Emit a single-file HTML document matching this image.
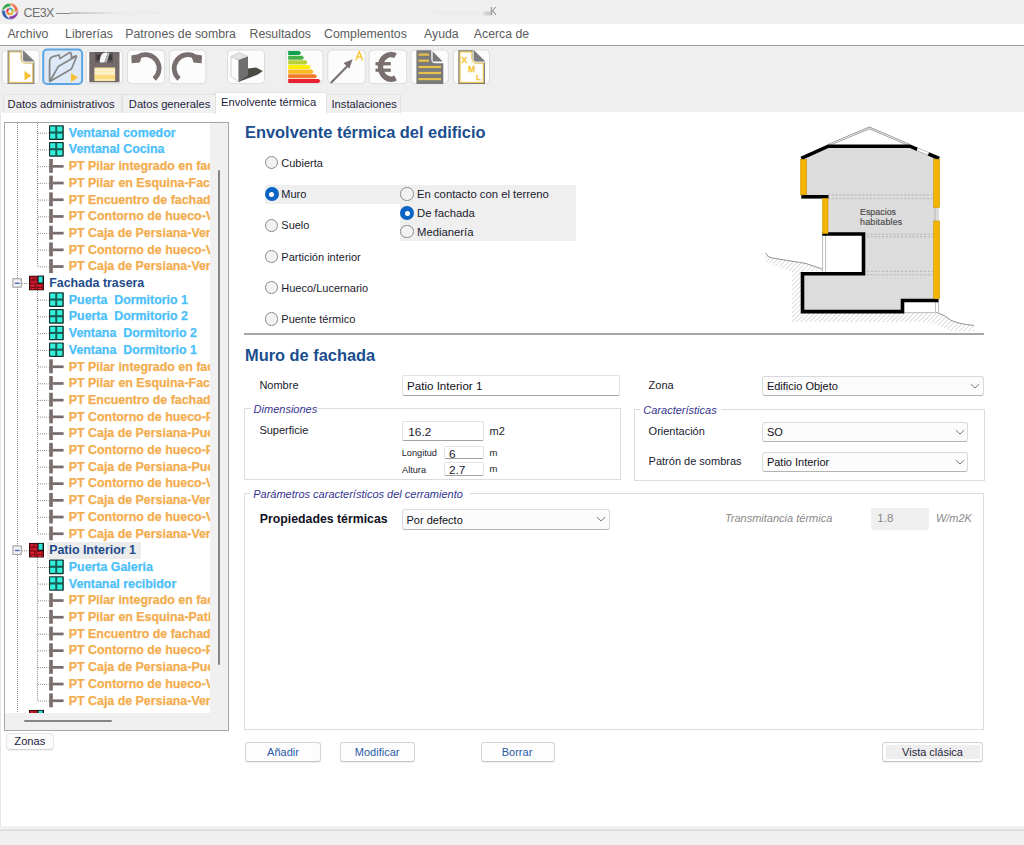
<!DOCTYPE html><html><head><meta charset="utf-8"><style>
html,body{margin:0;padding:0;width:1024px;height:845px;overflow:hidden;background:#fff;position:relative;font-family:"Liberation Sans", sans-serif}
.t{position:absolute;white-space:nowrap;line-height:0;}
</style></head><body>
<div style="position:absolute;left:0px;top:0px;width:1024px;height:24px;background:#f0f0f0"></div>
<svg style="position:absolute;left:0;top:0" width="24" height="24" viewBox="0 0 24 24">
<g transform="translate(10,11.4)">
<path id="pt" d="M-8.2,1.2 A8.3,8.3 0 0 1 1.3,-8.2 L0.8,-4.9 Q-5.2,-4.6 -8.2,1.2 Z" fill="#3ea84c" stroke="#f4f4f4" stroke-width="0.5"/>
<path d="M-8.2,1.2 A8.3,8.3 0 0 1 1.3,-8.2 L0.8,-4.9 Q-5.2,-4.6 -8.2,1.2 Z" fill="#ee7654" stroke="#f4f4f4" stroke-width="0.5" transform="rotate(90)"/>
<path d="M-8.2,1.2 A8.3,8.3 0 0 1 1.3,-8.2 L0.8,-4.9 Q-5.2,-4.6 -8.2,1.2 Z" fill="#8c44a4" stroke="#f4f4f4" stroke-width="0.5" transform="rotate(180)"/>
<path d="M-8.2,1.2 A8.3,8.3 0 0 1 1.3,-8.2 L0.8,-4.9 Q-5.2,-4.6 -8.2,1.2 Z" fill="#3c62b4" stroke="#f4f4f4" stroke-width="0.5" transform="rotate(270)"/>
<path d="M-2.7,0.6 A2.75,2.75 0 0 1 -1.2,-2.5" fill="none" stroke="#e03c60" stroke-width="2.1"/>
<path d="M-1.2,-2.5 A2.75,2.75 0 0 1 1.9,-2" fill="none" stroke="#50a8d0" stroke-width="2.1"/>
<path d="M1.9,-2 A2.75,2.75 0 0 1 2.6,1" fill="none" stroke="#98c040" stroke-width="2.1"/>
<path d="M2.6,1 A2.75,2.75 0 0 1 0.2,2.75" fill="none" stroke="#f0b828" stroke-width="2.1"/>
<path d="M0.2,2.75 A2.75,2.75 0 0 1 -2.7,0.6" fill="none" stroke="#f08838" stroke-width="2.1"/>
</g></svg>
<div class="t" style="left:23.50px;top:12.67px;font-size:12.5px;color:#707070;font-weight:normal;font-style:normal;letter-spacing:-0.6px">CE3X</div>
<div style="position:absolute;left:56px;top:12.6px;width:16px;height:1.2px;background:#8a8a8a;filter:blur(0.3px)"></div>
<div style="position:absolute;left:70px;top:12.2px;width:45px;height:1.6px;background:linear-gradient(90deg,#c0c0c0,#e8e8e8);filter:blur(0.7px)"></div>
<div style="position:absolute;left:110px;top:12px;width:380px;height:2px;background:linear-gradient(90deg,#eaeaea,#eeeeee 30%,#efefef 70%,#e8e8e8);filter:blur(1px)"></div>
<div style="position:absolute;left:484px;top:12px;width:8px;height:2.5px;background:#c4c4c4;filter:blur(0.8px)"></div>
<div class="t" style="left:490.00px;top:12.34px;font-size:10px;color:#8a8a8a;font-weight:normal;font-style:normal;filter:blur(0.3px)">K</div>
<div style="position:absolute;left:0px;top:24px;width:1024px;height:21px;background:#ffffff"></div>
<div style="position:absolute;left:0px;top:45px;width:1024px;height:1px;background:#a0a0a0"></div>
<div class="t" style="left:7.40px;top:34.44px;font-size:12.3px;color:#5c5c5c;font-weight:normal;font-style:normal;">Archivo</div>
<div class="t" style="left:65.10px;top:34.44px;font-size:12.3px;color:#5c5c5c;font-weight:normal;font-style:normal;">Librerías</div>
<div class="t" style="left:125.20px;top:34.44px;font-size:12.3px;color:#5c5c5c;font-weight:normal;font-style:normal;">Patrones de sombra</div>
<div class="t" style="left:249.50px;top:34.44px;font-size:12.3px;color:#5c5c5c;font-weight:normal;font-style:normal;">Resultados</div>
<div class="t" style="left:324.10px;top:34.44px;font-size:12.3px;color:#5c5c5c;font-weight:normal;font-style:normal;">Complementos</div>
<div class="t" style="left:424.00px;top:34.44px;font-size:12.3px;color:#5c5c5c;font-weight:normal;font-style:normal;">Ayuda</div>
<div class="t" style="left:473.80px;top:34.44px;font-size:12.3px;color:#5c5c5c;font-weight:normal;font-style:normal;">Acerca de</div>
<div style="position:absolute;left:0px;top:46px;width:1024px;height:66px;background:#efefef"></div>
<svg style="position:absolute;left:0;top:0" width="520" height="92" viewBox="0 0 520 92"><rect x="2.2" y="50.0" width="37.099999999999994" height="33.7" rx="4" fill="#fcfcfc" stroke="#dcdcdc" stroke-width="1"/><path d="M7.5,50.4 H23.5 L34.5,61.5 V84 H7.5Z" fill="#8a8a8a"/><path d="M9.3,52 H21 V58 Q21,63.2 26,63.2 H32.6 V82.3 H9.3Z" fill="#fff" stroke="#e8c870" stroke-width="1.2" stroke-linejoin="round"/><path d="M23.5,51.1 V61.3 H34.2Z" fill="#7c7c7c"/><path d="M22.3,50.4 V59.5 Q22.3,62.1 25,62.1 H34.5" fill="none" stroke="#fff" stroke-width="1"/><path d="M24.5,71 V80.4 L31.3,75.7Z" fill="#f8c030"/><rect x="43.2" y="49.6" width="38.89999999999999" height="34.300000000000004" rx="4" fill="#dde9f6" stroke="#5aa5e2" stroke-width="2"/><path d="M49.6,81.5 V61 Q50,57 53.5,56.3 L59.3,55 L59.8,58.6 L69.7,52.5 Q71.6,52.6 71.4,55 V57.5 L76.3,55.8 Q76.8,56.5 76,58 L71.4,69 L49.8,81.5 L58.2,66.6 L76,56.2" fill="none" stroke="#858585" stroke-width="1.7" stroke-linejoin="round"/><path d="M71,73.2 V82 L78,77.5Z" fill="#f8c030"/><rect x="86.2" y="50.0" width="36.3" height="33.7" rx="4" fill="#fcfcfc" stroke="#dcdcdc" stroke-width="1"/><rect x="89.3" y="51.9" width="30.2" height="30.4" fill="#746a6a"/><rect x="94.5" y="67.5" width="20.6" height="13.5" fill="#fce8a8"/><rect x="94.5" y="69.5" width="20.6" height="1.5" fill="#fdf4d8"/><rect x="94.5" y="72.5" width="20.6" height="1.5" fill="#fdf4d8"/><rect x="94.5" y="75.5" width="20.6" height="3" fill="#fcd878"/><rect x="95" y="52.2" width="18" height="10.4" fill="#5c5454"/><rect x="96.5" y="55" width="4" height="5" fill="#3c3838"/><rect x="108" y="55" width="4" height="5" fill="#3c3838"/><path d="M99.8,62.4 Q99.5,57 102.5,53.6 Q104.5,52.2 107.8,52.5 Q106.4,57.5 104.2,62.4Z" fill="#f6f6f6"/><path d="M104.2,62.4 Q106.4,57.5 107.8,52.5 L109.5,53 Q108.6,58 106.5,62.4Z" fill="#b8b8b8"/><rect x="127.4" y="50.0" width="37.29999999999998" height="33.7" rx="4" fill="#fcfcfc" stroke="#dcdcdc" stroke-width="1"/><path d="M154.21,78.79 A13.7,13.7 0 0 0 138.14,56.68" fill="none" stroke="#7a6f6f" stroke-width="4.8"/><path d="M131.3,55.6 L131.7,63.2 L139.8,62.6 L141.2,58.3 L136.6,54.4Z" fill="#7a6f6f"/><rect x="169.4" y="50.0" width="36.5" height="33.7" rx="4" fill="#fcfcfc" stroke="#dcdcdc" stroke-width="1"/><g transform="translate(333.3,0) scale(-1,1)"><path d="M154.21,78.79 A13.7,13.7 0 0 0 138.14,56.68" fill="none" stroke="#7a6f6f" stroke-width="4.8"/><path d="M131.3,55.6 L131.7,63.2 L139.8,62.6 L141.2,58.3 L136.6,54.4Z" fill="#7a6f6f"/></g><rect x="227.5" y="50.0" width="37" height="33.7" rx="4" fill="#fcfcfc" stroke="#dcdcdc" stroke-width="1"/><path d="M248,68.4 L256,67.4 L262.8,70.9 L257.9,74.4 L238.4,82Z" fill="#4a4a42"/><path d="M231,56.5 L231,76 L238.6,82 L238.6,60Z" fill="#fdfdfd" stroke="#c8c8c8" stroke-width="0.8"/><path d="M231,56.5 L239,52.5 L248,56.5 L238.6,60Z" fill="#e4e4e4" stroke="#c8c8c8" stroke-width="0.8"/><path d="M238.6,60 L248,56.5 L248,75.5 L238.6,82Z" fill="#6e6e6e"/><rect x="286.2" y="50.0" width="36.900000000000034" height="33.7" rx="4" fill="#fcfcfc" stroke="#dcdcdc" stroke-width="1"/><path d="M288.2,51.00 H299.20 L301.20,53.05 L299.20,55.10 H288.2Z" fill="#10a050"/><path d="M288.2,55.65 H302.20 L304.20,57.70 L302.20,59.75 H288.2Z" fill="#48b048"/><path d="M288.2,60.30 H305.70 L307.70,62.35 L305.70,64.40 H288.2Z" fill="#b8d038"/><path d="M288.2,64.95 H309.00 L311.00,67.00 L309.00,69.05 H288.2Z" fill="#fff000"/><path d="M288.2,69.60 H311.80 L313.80,71.65 L311.80,73.70 H288.2Z" fill="#fdb824"/><path d="M288.2,74.25 H315.20 L317.20,76.30 L315.20,78.35 H288.2Z" fill="#f27a2a"/><path d="M288.2,78.90 H318.60 L320.60,80.95 L318.60,83.00 H288.2Z" fill="#e82234"/><rect x="327.8" y="50.0" width="37.39999999999998" height="33.7" rx="4" fill="#fcfcfc" stroke="#dcdcdc" stroke-width="1"/><path d="M330.8,83 L347.2,66.3" stroke="#7a6f6f" stroke-width="2.1"/><path d="M352.6,59.3 L343.6,62.9 L349.3,68.8Z" fill="#7a6f6f"/><path d="M355.9,60.2 L359.25,51.4 L362.6,60.2 M357.1,57 H361.4" fill="none" stroke="#f8c838" stroke-width="1.5" stroke-linejoin="round"/><rect x="369.1" y="50.0" width="37.599999999999966" height="33.7" rx="4" fill="#fcfcfc" stroke="#dcdcdc" stroke-width="1"/><path d="M395.6,55.7 A10.6,12.3 0 1 0 395.6,78" fill="none" stroke="#7a6f6f" stroke-width="5.4"/><rect x="375.5" y="62.1" width="15.3" height="3.3" fill="#7a6f6f"/><rect x="375.5" y="68.6" width="15.3" height="3.2" fill="#7a6f6f"/><rect x="411.0" y="50.0" width="37.30000000000001" height="33.7" rx="4" fill="#fcfcfc" stroke="#dcdcdc" stroke-width="1"/><path d="M416.4,50.2 H431.3 V59 Q431.3,63.3 435.5,63.3 H443.3 V84 H416.4Z" fill="#7a7a7a"/><path d="M432.6,51.3 V61.4 H442.7Z" fill="#7a7a7a"/><rect x="418.5" y="53.5" width="10.5" height="2.2" fill="#e6c24a"/><rect x="418.5" y="59.6" width="10.5" height="2.2" fill="#e6c24a"/><rect x="418.5" y="65.9" width="22.5" height="2.2" fill="#e6c24a"/><rect x="418.5" y="71.9" width="22.5" height="2.2" fill="#e6c24a"/><rect x="418.5" y="78.0" width="22.5" height="2.2" fill="#e6c24a"/><rect x="453.5" y="50.0" width="36" height="33.7" rx="4" fill="#fcfcfc" stroke="#dcdcdc" stroke-width="1"/><path d="M458.3,50.2 H474 L485,61.3 V84 H458.3Z" fill="#7a7a7a"/><path d="M460,51.9 H471.8 V57.8 Q471.8,63.2 477,63.2 H483.3 V82.3 H460Z" fill="#fff" stroke="#f0ca58" stroke-width="1.2" stroke-linejoin="round"/><path d="M474.3,51.1 V61.3 H485Z" fill="#7c7c7c"/><path d="M473.1,50.4 V59.5 Q473.1,62.1 475.8,62.1 H485.3" fill="none" stroke="#fff" stroke-width="1"/><text x="461.3" y="62.7" font-family="Liberation Sans" font-weight="bold" font-size="9.2" fill="#f8c840" stroke="#f8c840" stroke-width="0.3">X</text><text x="467.9" y="72.1" font-family="Liberation Sans" font-weight="bold" font-size="8.6" fill="#f8c840" stroke="#f8c840" stroke-width="0.3">M</text><text x="476" y="79.7" font-family="Liberation Sans" font-weight="bold" font-size="8" fill="#f8c840" stroke="#f8c840" stroke-width="0.3">L</text></svg>
<div style="position:absolute;left:0px;top:112px;width:1024px;height:716px;background:#ffffff"></div>
<div style="position:absolute;left:2.5px;top:93.5px;width:117.7px;height:18.5px;background:#f0f0f0;border:1px solid #e2e2e2;border-bottom:none"></div>
<div style="position:absolute;left:121.5px;top:93.5px;width:92.0px;height:18.5px;background:#f0f0f0;border:1px solid #e2e2e2;border-bottom:none"></div>
<div style="position:absolute;left:325.5px;top:93.5px;width:73.5px;height:18.5px;background:#f0f0f0;border:1px solid #e2e2e2;border-bottom:none"></div>
<div class="t" style="left:7.60px;top:103.72px;font-size:11.2px;color:#1e1e3c;font-weight:normal;font-style:normal;">Datos administrativos</div>
<div class="t" style="left:128.80px;top:103.72px;font-size:11.2px;color:#1e1e3c;font-weight:normal;font-style:normal;">Datos generales</div>
<div class="t" style="left:331.50px;top:103.72px;font-size:11.2px;color:#1e1e3c;font-weight:normal;font-style:normal;">Instalaciones</div>
<div style="position:absolute;left:215px;top:91.5px;width:109.5px;height:21px;background:#ffffff;border:1px solid #e2e2e2;border-bottom:none"></div>
<div class="t" style="left:221.00px;top:102.42px;font-size:11.2px;color:#1e1e3c;font-weight:normal;font-style:normal;">Envolvente térmica</div>
<div style="position:absolute;left:0px;top:112px;width:1px;height:714px;background:#e6e6e6"></div>
<div style="position:absolute;left:0px;top:826px;width:1024px;height:4px;background:linear-gradient(#f4f4f4,#e8e8e8)"></div>
<div style="position:absolute;left:0px;top:830px;width:1024px;height:1px;background:#d8d8d8"></div>
<div style="position:absolute;left:0px;top:831px;width:1024px;height:14px;background:#f0f0f0"></div>
<div style="position:absolute;left:5px;top:123px;width:205px;height:590px;overflow:hidden"><div style="position:absolute;left:-5px;top:-123px;width:1024px;height:845px"><svg style="position:absolute;left:5px;top:123px" width="205" height="590" viewBox="5 123 205 590"><line x1="17.5" y1="123" x2="17.5" y2="713" stroke="#8e8e8e" stroke-width="1" stroke-dasharray="1,1"/><line x1="37.5" y1="123.0" x2="37.5" y2="266.4" stroke="#8e8e8e" stroke-width="1" stroke-dasharray="1,1"/><line x1="37.5" y1="290.0" x2="37.5" y2="533.5" stroke="#8e8e8e" stroke-width="1" stroke-dasharray="1,1"/><line x1="37.5" y1="557.2" x2="37.5" y2="700.5" stroke="#8e8e8e" stroke-width="1" stroke-dasharray="1,1"/><line x1="38" y1="133.2" x2="48.5" y2="133.2" stroke="#8e8e8e" stroke-width="1" stroke-dasharray="1,1"/><rect x="49" y="125.35" width="14.8" height="14.6" rx="0.8" fill="#12302c"/><rect x="55.2" y="126.25" width="2.2" height="12.8" fill="#1a5a54"/><rect x="50" y="131.65" width="12.8" height="2" fill="#1a5a54"/><rect x="50.10" y="126.45" width="5.2" height="5.1" fill="#32f2dc"/><rect x="50.10" y="133.55" width="5.2" height="5.1" fill="#32f2dc"/><rect x="57.20" y="126.45" width="5.2" height="5.1" fill="#32f2dc"/><rect x="57.20" y="133.55" width="5.2" height="5.1" fill="#32f2dc"/><line x1="38" y1="149.9" x2="48.5" y2="149.9" stroke="#8e8e8e" stroke-width="1" stroke-dasharray="1,1"/><rect x="49" y="142.05" width="14.8" height="14.6" rx="0.8" fill="#12302c"/><rect x="55.2" y="142.95" width="2.2" height="12.8" fill="#1a5a54"/><rect x="50" y="148.35" width="12.8" height="2" fill="#1a5a54"/><rect x="50.10" y="143.15" width="5.2" height="5.1" fill="#32f2dc"/><rect x="50.10" y="150.25" width="5.2" height="5.1" fill="#32f2dc"/><rect x="57.20" y="143.15" width="5.2" height="5.1" fill="#32f2dc"/><rect x="57.20" y="150.25" width="5.2" height="5.1" fill="#32f2dc"/><line x1="38" y1="166.7" x2="48.5" y2="166.7" stroke="#8e8e8e" stroke-width="1" stroke-dasharray="1,1"/><rect x="49.2" y="158.95" width="3.6" height="13.9" fill="#786c6c"/><rect x="52.6" y="165.00" width="11" height="2.7" fill="#786c6c"/><line x1="38" y1="183.3" x2="48.5" y2="183.3" stroke="#8e8e8e" stroke-width="1" stroke-dasharray="1,1"/><rect x="49.2" y="175.65" width="3.6" height="13.9" fill="#786c6c"/><rect x="52.6" y="181.70" width="11" height="2.7" fill="#786c6c"/><line x1="38" y1="200.1" x2="48.5" y2="200.1" stroke="#8e8e8e" stroke-width="1" stroke-dasharray="1,1"/><rect x="49.2" y="192.35" width="3.6" height="13.9" fill="#786c6c"/><rect x="52.6" y="198.40" width="11" height="2.7" fill="#786c6c"/><line x1="38" y1="216.8" x2="48.5" y2="216.8" stroke="#8e8e8e" stroke-width="1" stroke-dasharray="1,1"/><rect x="49.2" y="209.05" width="3.6" height="13.9" fill="#786c6c"/><rect x="52.6" y="215.10" width="11" height="2.7" fill="#786c6c"/><line x1="38" y1="233.4" x2="48.5" y2="233.4" stroke="#8e8e8e" stroke-width="1" stroke-dasharray="1,1"/><rect x="49.2" y="225.75" width="3.6" height="13.9" fill="#786c6c"/><rect x="52.6" y="231.80" width="11" height="2.7" fill="#786c6c"/><line x1="38" y1="250.1" x2="48.5" y2="250.1" stroke="#8e8e8e" stroke-width="1" stroke-dasharray="1,1"/><rect x="49.2" y="242.45" width="3.6" height="13.9" fill="#786c6c"/><rect x="52.6" y="248.50" width="11" height="2.7" fill="#786c6c"/><line x1="38" y1="266.9" x2="48.5" y2="266.9" stroke="#8e8e8e" stroke-width="1" stroke-dasharray="1,1"/><rect x="49.2" y="259.15" width="3.6" height="13.9" fill="#786c6c"/><rect x="52.6" y="265.20" width="11" height="2.7" fill="#786c6c"/><rect x="12.9" y="278.75" width="8.4" height="8.4" fill="#f2f2f2" stroke="#9a9a9a" stroke-width="1"/><rect x="14.8" y="282.65" width="4.8" height="1.3" fill="#4060b0"/><line x1="22" y1="283.5" x2="28.5" y2="283.5" stroke="#8e8e8e" stroke-width="1" stroke-dasharray="1,1"/><rect x="29" y="275.75" width="15" height="14.5" fill="#1a0808"/><rect x="29.8" y="276.55" width="13.4" height="13" fill="#b41424"/><rect x="37.5" y="275.75" width="6.5" height="8" fill="#101010"/><rect x="38.6" y="276.55" width="4" height="6" fill="#30e8d8"/><path d="M30,280.0 H37 M30,284.0 H43 M30,287.5 H43 M33,276.5 V280.0 M35,284.0 V287.5 M39,284.0 V287.5" stroke="#6a0c14" stroke-width="0.9" opacity="0.8"/><path d="M31,278.0 h2 M34,282.0 h2 M31,285.5 h3 M38,285.5 h3 M32,288.5 h2 M39,288.5 h2" stroke="#ff2840" stroke-width="1.2" opacity="0.9"/><line x1="38" y1="300.2" x2="48.5" y2="300.2" stroke="#8e8e8e" stroke-width="1" stroke-dasharray="1,1"/><rect x="49" y="292.35" width="14.8" height="14.6" rx="0.8" fill="#12302c"/><rect x="55.2" y="293.25" width="2.2" height="12.8" fill="#1a5a54"/><rect x="50" y="298.65" width="12.8" height="2" fill="#1a5a54"/><rect x="50.10" y="293.45" width="5.2" height="5.1" fill="#32f2dc"/><rect x="50.10" y="300.55" width="5.2" height="5.1" fill="#32f2dc"/><rect x="57.20" y="293.45" width="5.2" height="5.1" fill="#32f2dc"/><rect x="57.20" y="300.55" width="5.2" height="5.1" fill="#32f2dc"/><line x1="38" y1="316.9" x2="48.5" y2="316.9" stroke="#8e8e8e" stroke-width="1" stroke-dasharray="1,1"/><rect x="49" y="309.05" width="14.8" height="14.6" rx="0.8" fill="#12302c"/><rect x="55.2" y="309.95" width="2.2" height="12.8" fill="#1a5a54"/><rect x="50" y="315.35" width="12.8" height="2" fill="#1a5a54"/><rect x="50.10" y="310.15" width="5.2" height="5.1" fill="#32f2dc"/><rect x="50.10" y="317.25" width="5.2" height="5.1" fill="#32f2dc"/><rect x="57.20" y="310.15" width="5.2" height="5.1" fill="#32f2dc"/><rect x="57.20" y="317.25" width="5.2" height="5.1" fill="#32f2dc"/><line x1="38" y1="333.6" x2="48.5" y2="333.6" stroke="#8e8e8e" stroke-width="1" stroke-dasharray="1,1"/><rect x="49" y="325.75" width="14.8" height="14.6" rx="0.8" fill="#12302c"/><rect x="55.2" y="326.65" width="2.2" height="12.8" fill="#1a5a54"/><rect x="50" y="332.05" width="12.8" height="2" fill="#1a5a54"/><rect x="50.10" y="326.85" width="5.2" height="5.1" fill="#32f2dc"/><rect x="50.10" y="333.95" width="5.2" height="5.1" fill="#32f2dc"/><rect x="57.20" y="326.85" width="5.2" height="5.1" fill="#32f2dc"/><rect x="57.20" y="333.95" width="5.2" height="5.1" fill="#32f2dc"/><line x1="38" y1="350.4" x2="48.5" y2="350.4" stroke="#8e8e8e" stroke-width="1" stroke-dasharray="1,1"/><rect x="49" y="342.45" width="14.8" height="14.6" rx="0.8" fill="#12302c"/><rect x="55.2" y="343.35" width="2.2" height="12.8" fill="#1a5a54"/><rect x="50" y="348.75" width="12.8" height="2" fill="#1a5a54"/><rect x="50.10" y="343.55" width="5.2" height="5.1" fill="#32f2dc"/><rect x="50.10" y="350.65" width="5.2" height="5.1" fill="#32f2dc"/><rect x="57.20" y="343.55" width="5.2" height="5.1" fill="#32f2dc"/><rect x="57.20" y="350.65" width="5.2" height="5.1" fill="#32f2dc"/><line x1="38" y1="367.0" x2="48.5" y2="367.0" stroke="#8e8e8e" stroke-width="1" stroke-dasharray="1,1"/><rect x="49.2" y="359.35" width="3.6" height="13.9" fill="#786c6c"/><rect x="52.6" y="365.40" width="11" height="2.7" fill="#786c6c"/><line x1="38" y1="383.8" x2="48.5" y2="383.8" stroke="#8e8e8e" stroke-width="1" stroke-dasharray="1,1"/><rect x="49.2" y="376.05" width="3.6" height="13.9" fill="#786c6c"/><rect x="52.6" y="382.10" width="11" height="2.7" fill="#786c6c"/><line x1="38" y1="400.4" x2="48.5" y2="400.4" stroke="#8e8e8e" stroke-width="1" stroke-dasharray="1,1"/><rect x="49.2" y="392.75" width="3.6" height="13.9" fill="#786c6c"/><rect x="52.6" y="398.80" width="11" height="2.7" fill="#786c6c"/><line x1="38" y1="417.1" x2="48.5" y2="417.1" stroke="#8e8e8e" stroke-width="1" stroke-dasharray="1,1"/><rect x="49.2" y="409.45" width="3.6" height="13.9" fill="#786c6c"/><rect x="52.6" y="415.50" width="11" height="2.7" fill="#786c6c"/><line x1="38" y1="433.8" x2="48.5" y2="433.8" stroke="#8e8e8e" stroke-width="1" stroke-dasharray="1,1"/><rect x="49.2" y="426.15" width="3.6" height="13.9" fill="#786c6c"/><rect x="52.6" y="432.20" width="11" height="2.7" fill="#786c6c"/><line x1="38" y1="450.6" x2="48.5" y2="450.6" stroke="#8e8e8e" stroke-width="1" stroke-dasharray="1,1"/><rect x="49.2" y="442.85" width="3.6" height="13.9" fill="#786c6c"/><rect x="52.6" y="448.90" width="11" height="2.7" fill="#786c6c"/><line x1="38" y1="467.2" x2="48.5" y2="467.2" stroke="#8e8e8e" stroke-width="1" stroke-dasharray="1,1"/><rect x="49.2" y="459.55" width="3.6" height="13.9" fill="#786c6c"/><rect x="52.6" y="465.60" width="11" height="2.7" fill="#786c6c"/><line x1="38" y1="483.9" x2="48.5" y2="483.9" stroke="#8e8e8e" stroke-width="1" stroke-dasharray="1,1"/><rect x="49.2" y="476.25" width="3.6" height="13.9" fill="#786c6c"/><rect x="52.6" y="482.30" width="11" height="2.7" fill="#786c6c"/><line x1="38" y1="500.6" x2="48.5" y2="500.6" stroke="#8e8e8e" stroke-width="1" stroke-dasharray="1,1"/><rect x="49.2" y="492.95" width="3.6" height="13.9" fill="#786c6c"/><rect x="52.6" y="499.00" width="11" height="2.7" fill="#786c6c"/><line x1="38" y1="517.3" x2="48.5" y2="517.3" stroke="#8e8e8e" stroke-width="1" stroke-dasharray="1,1"/><rect x="49.2" y="509.65" width="3.6" height="13.9" fill="#786c6c"/><rect x="52.6" y="515.70" width="11" height="2.7" fill="#786c6c"/><line x1="38" y1="534.0" x2="48.5" y2="534.0" stroke="#8e8e8e" stroke-width="1" stroke-dasharray="1,1"/><rect x="49.2" y="526.35" width="3.6" height="13.9" fill="#786c6c"/><rect x="52.6" y="532.40" width="11" height="2.7" fill="#786c6c"/><rect x="12.9" y="545.95" width="8.4" height="8.4" fill="#f2f2f2" stroke="#9a9a9a" stroke-width="1"/><rect x="14.8" y="549.85" width="4.8" height="1.3" fill="#4060b0"/><line x1="22" y1="550.8" x2="28.5" y2="550.8" stroke="#8e8e8e" stroke-width="1" stroke-dasharray="1,1"/><rect x="29" y="542.95" width="15" height="14.5" fill="#1a0808"/><rect x="29.8" y="543.75" width="13.4" height="13" fill="#b41424"/><rect x="37.5" y="542.95" width="6.5" height="8" fill="#101010"/><rect x="38.6" y="543.75" width="4" height="6" fill="#30e8d8"/><path d="M30,547.2 H37 M30,551.2 H43 M30,554.8 H43 M33,543.8 V547.2 M35,551.2 V554.8 M39,551.2 V554.8" stroke="#6a0c14" stroke-width="0.9" opacity="0.8"/><path d="M31,545.2 h2 M34,549.2 h2 M31,552.8 h3 M38,552.8 h3 M32,555.8 h2 M39,555.8 h2" stroke="#ff2840" stroke-width="1.2" opacity="0.9"/><line x1="38" y1="567.5" x2="48.5" y2="567.5" stroke="#8e8e8e" stroke-width="1" stroke-dasharray="1,1"/><rect x="49" y="559.55" width="14.8" height="14.6" rx="0.8" fill="#12302c"/><rect x="55.2" y="560.45" width="2.2" height="12.8" fill="#1a5a54"/><rect x="50" y="565.85" width="12.8" height="2" fill="#1a5a54"/><rect x="50.10" y="560.65" width="5.2" height="5.1" fill="#32f2dc"/><rect x="50.10" y="567.75" width="5.2" height="5.1" fill="#32f2dc"/><rect x="57.20" y="560.65" width="5.2" height="5.1" fill="#32f2dc"/><rect x="57.20" y="567.75" width="5.2" height="5.1" fill="#32f2dc"/><line x1="38" y1="584.1" x2="48.5" y2="584.1" stroke="#8e8e8e" stroke-width="1" stroke-dasharray="1,1"/><rect x="49" y="576.25" width="14.8" height="14.6" rx="0.8" fill="#12302c"/><rect x="55.2" y="577.15" width="2.2" height="12.8" fill="#1a5a54"/><rect x="50" y="582.55" width="12.8" height="2" fill="#1a5a54"/><rect x="50.10" y="577.35" width="5.2" height="5.1" fill="#32f2dc"/><rect x="50.10" y="584.45" width="5.2" height="5.1" fill="#32f2dc"/><rect x="57.20" y="577.35" width="5.2" height="5.1" fill="#32f2dc"/><rect x="57.20" y="584.45" width="5.2" height="5.1" fill="#32f2dc"/><line x1="38" y1="600.8" x2="48.5" y2="600.8" stroke="#8e8e8e" stroke-width="1" stroke-dasharray="1,1"/><rect x="49.2" y="593.15" width="3.6" height="13.9" fill="#786c6c"/><rect x="52.6" y="599.20" width="11" height="2.7" fill="#786c6c"/><line x1="38" y1="617.5" x2="48.5" y2="617.5" stroke="#8e8e8e" stroke-width="1" stroke-dasharray="1,1"/><rect x="49.2" y="609.85" width="3.6" height="13.9" fill="#786c6c"/><rect x="52.6" y="615.90" width="11" height="2.7" fill="#786c6c"/><line x1="38" y1="634.2" x2="48.5" y2="634.2" stroke="#8e8e8e" stroke-width="1" stroke-dasharray="1,1"/><rect x="49.2" y="626.55" width="3.6" height="13.9" fill="#786c6c"/><rect x="52.6" y="632.60" width="11" height="2.7" fill="#786c6c"/><line x1="38" y1="650.9" x2="48.5" y2="650.9" stroke="#8e8e8e" stroke-width="1" stroke-dasharray="1,1"/><rect x="49.2" y="643.25" width="3.6" height="13.9" fill="#786c6c"/><rect x="52.6" y="649.30" width="11" height="2.7" fill="#786c6c"/><line x1="38" y1="667.6" x2="48.5" y2="667.6" stroke="#8e8e8e" stroke-width="1" stroke-dasharray="1,1"/><rect x="49.2" y="659.95" width="3.6" height="13.9" fill="#786c6c"/><rect x="52.6" y="666.00" width="11" height="2.7" fill="#786c6c"/><line x1="38" y1="684.4" x2="48.5" y2="684.4" stroke="#8e8e8e" stroke-width="1" stroke-dasharray="1,1"/><rect x="49.2" y="676.65" width="3.6" height="13.9" fill="#786c6c"/><rect x="52.6" y="682.70" width="11" height="2.7" fill="#786c6c"/><line x1="38" y1="701.0" x2="48.5" y2="701.0" stroke="#8e8e8e" stroke-width="1" stroke-dasharray="1,1"/><rect x="49.2" y="693.35" width="3.6" height="13.9" fill="#786c6c"/><rect x="52.6" y="699.40" width="11" height="2.7" fill="#786c6c"/><line x1="22" y1="717.8" x2="28.5" y2="717.8" stroke="#8e8e8e" stroke-width="1" stroke-dasharray="1,1"/><rect x="29" y="709.95" width="15" height="14.5" fill="#1a0808"/><rect x="29.8" y="710.75" width="13.4" height="13" fill="#b41424"/><rect x="37.5" y="709.95" width="6.5" height="8" fill="#101010"/><rect x="38.6" y="710.75" width="4" height="6" fill="#30e8d8"/><path d="M30,714.2 H37 M30,718.2 H43 M30,721.8 H43 M33,710.8 V714.2 M35,718.2 V721.8 M39,718.2 V721.8" stroke="#6a0c14" stroke-width="0.9" opacity="0.8"/><path d="M31,712.2 h2 M34,716.2 h2 M31,719.8 h3 M38,719.8 h3 M32,722.8 h2 M39,722.8 h2" stroke="#ff2840" stroke-width="1.2" opacity="0.9"/></svg><div class="t" style="left:68.8px;top:132.75px;font-size:12.4px;font-weight:bold;color:#4cc0fa;-webkit-text-stroke:0.25px #4cc0fa">Ventanal comedor</div><div class="t" style="left:68.8px;top:149.45px;font-size:12.4px;font-weight:bold;color:#4cc0fa;-webkit-text-stroke:0.25px #4cc0fa">Ventanal Cocina</div><div class="t" style="left:68.8px;top:166.15px;font-size:12.4px;font-weight:bold;color:#f4ad4e;-webkit-text-stroke:0.25px #f4ad4e">PT Pilar integrado en fachada</div><div class="t" style="left:68.8px;top:182.85px;font-size:12.4px;font-weight:bold;color:#f4ad4e;-webkit-text-stroke:0.25px #f4ad4e">PT Pilar en Esquina-Fachada</div><div class="t" style="left:68.8px;top:199.55px;font-size:12.4px;font-weight:bold;color:#f4ad4e;-webkit-text-stroke:0.25px #f4ad4e">PT Encuentro de fachada</div><div class="t" style="left:68.8px;top:216.25px;font-size:12.4px;font-weight:bold;color:#f4ad4e;-webkit-text-stroke:0.25px #f4ad4e">PT Contorno de hueco-Ventanal</div><div class="t" style="left:68.8px;top:232.95px;font-size:12.4px;font-weight:bold;color:#f4ad4e;-webkit-text-stroke:0.25px #f4ad4e">PT Caja de Persiana-Ventanal</div><div class="t" style="left:68.8px;top:249.65px;font-size:12.4px;font-weight:bold;color:#f4ad4e;-webkit-text-stroke:0.25px #f4ad4e">PT Contorno de hueco-Ventanal</div><div class="t" style="left:68.8px;top:266.35px;font-size:12.4px;font-weight:bold;color:#f4ad4e;-webkit-text-stroke:0.25px #f4ad4e">PT Caja de Persiana-Ventanal</div><div class="t" style="left:49.2px;top:283.05px;font-size:12.4px;font-weight:bold;color:#1d4b8c">Fachada trasera</div><div class="t" style="left:68.8px;top:299.75px;font-size:12.4px;font-weight:bold;color:#4cc0fa;-webkit-text-stroke:0.25px #4cc0fa">Puerta&nbsp; Dormitorio 1</div><div class="t" style="left:68.8px;top:316.45px;font-size:12.4px;font-weight:bold;color:#4cc0fa;-webkit-text-stroke:0.25px #4cc0fa">Puerta&nbsp; Dormitorio 2</div><div class="t" style="left:68.8px;top:333.15px;font-size:12.4px;font-weight:bold;color:#4cc0fa;-webkit-text-stroke:0.25px #4cc0fa">Ventana&nbsp; Dormitorio 2</div><div class="t" style="left:68.8px;top:349.85px;font-size:12.4px;font-weight:bold;color:#4cc0fa;-webkit-text-stroke:0.25px #4cc0fa">Ventana&nbsp; Dormitorio 1</div><div class="t" style="left:68.8px;top:366.55px;font-size:12.4px;font-weight:bold;color:#f4ad4e;-webkit-text-stroke:0.25px #f4ad4e">PT Pilar integrado en fachada</div><div class="t" style="left:68.8px;top:383.25px;font-size:12.4px;font-weight:bold;color:#f4ad4e;-webkit-text-stroke:0.25px #f4ad4e">PT Pilar en Esquina-Fachada</div><div class="t" style="left:68.8px;top:399.95px;font-size:12.4px;font-weight:bold;color:#f4ad4e;-webkit-text-stroke:0.25px #f4ad4e">PT Encuentro de fachada</div><div class="t" style="left:68.8px;top:416.65px;font-size:12.4px;font-weight:bold;color:#f4ad4e;-webkit-text-stroke:0.25px #f4ad4e">PT Contorno de hueco-Puerta</div><div class="t" style="left:68.8px;top:433.35px;font-size:12.4px;font-weight:bold;color:#f4ad4e;-webkit-text-stroke:0.25px #f4ad4e">PT Caja de Persiana-Puerta</div><div class="t" style="left:68.8px;top:450.05px;font-size:12.4px;font-weight:bold;color:#f4ad4e;-webkit-text-stroke:0.25px #f4ad4e">PT Contorno de hueco-Puerta</div><div class="t" style="left:68.8px;top:466.75px;font-size:12.4px;font-weight:bold;color:#f4ad4e;-webkit-text-stroke:0.25px #f4ad4e">PT Caja de Persiana-Puerta</div><div class="t" style="left:68.8px;top:483.45px;font-size:12.4px;font-weight:bold;color:#f4ad4e;-webkit-text-stroke:0.25px #f4ad4e">PT Contorno de hueco-Ventana</div><div class="t" style="left:68.8px;top:500.15px;font-size:12.4px;font-weight:bold;color:#f4ad4e;-webkit-text-stroke:0.25px #f4ad4e">PT Caja de Persiana-Ventana</div><div class="t" style="left:68.8px;top:516.85px;font-size:12.4px;font-weight:bold;color:#f4ad4e;-webkit-text-stroke:0.25px #f4ad4e">PT Contorno de hueco-Ventana</div><div class="t" style="left:68.8px;top:533.55px;font-size:12.4px;font-weight:bold;color:#f4ad4e;-webkit-text-stroke:0.25px #f4ad4e">PT Caja de Persiana-Ventana</div><div style="position:absolute;left:47px;top:541.75px;width:93.5px;height:17px;background:#ececec"></div><div class="t" style="left:49.2px;top:550.25px;font-size:12.4px;font-weight:bold;color:#1d4b8c">Patio Interior 1</div><div class="t" style="left:68.8px;top:566.95px;font-size:12.4px;font-weight:bold;color:#4cc0fa;-webkit-text-stroke:0.25px #4cc0fa">Puerta Galeria</div><div class="t" style="left:68.8px;top:583.65px;font-size:12.4px;font-weight:bold;color:#4cc0fa;-webkit-text-stroke:0.25px #4cc0fa">Ventanal recibidor</div><div class="t" style="left:68.8px;top:600.35px;font-size:12.4px;font-weight:bold;color:#f4ad4e;-webkit-text-stroke:0.25px #f4ad4e">PT Pilar integrado en fachada</div><div class="t" style="left:68.8px;top:617.05px;font-size:12.4px;font-weight:bold;color:#f4ad4e;-webkit-text-stroke:0.25px #f4ad4e">PT Pilar en Esquina-Patio</div><div class="t" style="left:68.8px;top:633.75px;font-size:12.4px;font-weight:bold;color:#f4ad4e;-webkit-text-stroke:0.25px #f4ad4e">PT Encuentro de fachada</div><div class="t" style="left:68.8px;top:650.45px;font-size:12.4px;font-weight:bold;color:#f4ad4e;-webkit-text-stroke:0.25px #f4ad4e">PT Contorno de hueco-Puerta</div><div class="t" style="left:68.8px;top:667.15px;font-size:12.4px;font-weight:bold;color:#f4ad4e;-webkit-text-stroke:0.25px #f4ad4e">PT Caja de Persiana-Puerta</div><div class="t" style="left:68.8px;top:683.85px;font-size:12.4px;font-weight:bold;color:#f4ad4e;-webkit-text-stroke:0.25px #f4ad4e">PT Contorno de hueco-Ventana</div><div class="t" style="left:68.8px;top:700.55px;font-size:12.4px;font-weight:bold;color:#f4ad4e;-webkit-text-stroke:0.25px #f4ad4e">PT Caja de Persiana-Ventana</div></div></div>
<div style="position:absolute;left:210px;top:123px;width:18px;height:590px;background:#f0f0f0"></div>
<div style="position:absolute;left:218.1px;top:170.3px;width:2.4px;height:495.2px;background:#858585;border-radius:1px"></div>
<div style="position:absolute;left:5px;top:713px;width:223px;height:18px;background:#f0f0f0"></div>
<div style="position:absolute;left:24px;top:720.2px;width:88px;height:2.1px;background:#858585;border-radius:1px"></div>
<div style="position:absolute;left:4px;top:122px;width:223.2px;height:607.2px;border:1.3px solid #a4a7ad"></div>
<div style="position:absolute;left:6px;top:732.6px;width:46.4px;height:15.2px;background:#fcfcfc;border:1px solid #e6e6e6;border-bottom-color:#d4d4d4;border-radius:4px;box-shadow:0 1px 1px rgba(0,0,0,0.05)"></div>
<div class="t" style="left:14.30px;top:740.62px;font-size:11.2px;color:#1e1e3c;font-weight:normal;font-style:normal;">Zonas</div>
<div class="t" style="left:245.00px;top:132.02px;font-size:16.4px;color:#1a4e8e;font-weight:bold;font-style:normal;">Envolvente térmica del edificio</div>
<div style="position:absolute;left:264.5px;top:184.8px;width:311.5px;height:18.8px;background:#efefef"></div>
<div style="position:absolute;left:400.3px;top:184.8px;width:175.7px;height:56px;background:#efefef"></div>
<div style="position:absolute;left:264.50px;top:156.00px;width:11.4px;height:11.4px;border-radius:50%;border:1.3px solid #8a8a8a;background:#f2f2f2"></div>
<div class="t" style="left:281.30px;top:162.99px;font-size:11px;color:#1a1a2e;font-weight:normal;font-style:normal;">Cubierta</div>
<div style="position:absolute;left:264.50px;top:187.30px;width:14px;height:14px;border-radius:50%;background:#0a64c4"></div>
<div style="position:absolute;left:269.00px;top:191.80px;width:5px;height:5px;border-radius:50%;background:#fff"></div>
<div class="t" style="left:281.30px;top:194.29px;font-size:11px;color:#1a1a2e;font-weight:normal;font-style:normal;">Muro</div>
<div style="position:absolute;left:264.50px;top:218.50px;width:11.4px;height:11.4px;border-radius:50%;border:1.3px solid #8a8a8a;background:#f2f2f2"></div>
<div class="t" style="left:281.30px;top:225.49px;font-size:11px;color:#1a1a2e;font-weight:normal;font-style:normal;">Suelo</div>
<div style="position:absolute;left:264.50px;top:249.80px;width:11.4px;height:11.4px;border-radius:50%;border:1.3px solid #8a8a8a;background:#f2f2f2"></div>
<div class="t" style="left:281.30px;top:256.79px;font-size:11px;color:#1a1a2e;font-weight:normal;font-style:normal;">Partición interior</div>
<div style="position:absolute;left:264.50px;top:281.10px;width:11.4px;height:11.4px;border-radius:50%;border:1.3px solid #8a8a8a;background:#f2f2f2"></div>
<div class="t" style="left:281.30px;top:288.09px;font-size:11px;color:#1a1a2e;font-weight:normal;font-style:normal;">Hueco/Lucernario</div>
<div style="position:absolute;left:264.50px;top:312.40px;width:11.4px;height:11.4px;border-radius:50%;border:1.3px solid #8a8a8a;background:#f2f2f2"></div>
<div class="t" style="left:281.30px;top:319.39px;font-size:11px;color:#1a1a2e;font-weight:normal;font-style:normal;">Puente térmico</div>
<div style="position:absolute;left:400.30px;top:187.30px;width:11.4px;height:11.4px;border-radius:50%;border:1.3px solid #8a8a8a;background:#f2f2f2"></div>
<div class="t" style="left:417.00px;top:194.18px;font-size:11.3px;color:#1a1a2e;font-weight:normal;font-style:normal;">En contacto con el terreno</div>
<div style="position:absolute;left:400.30px;top:206.00px;width:14px;height:14px;border-radius:50%;background:#0a64c4"></div>
<div style="position:absolute;left:404.80px;top:210.50px;width:5px;height:5px;border-radius:50%;background:#fff"></div>
<div class="t" style="left:417.00px;top:212.88px;font-size:11.3px;color:#1a1a2e;font-weight:normal;font-style:normal;">De fachada</div>
<div style="position:absolute;left:400.30px;top:225.10px;width:11.4px;height:11.4px;border-radius:50%;border:1.3px solid #8a8a8a;background:#f2f2f2"></div>
<div class="t" style="left:417.00px;top:231.98px;font-size:11.3px;color:#1a1a2e;font-weight:normal;font-style:normal;">Medianería</div>
<div style="position:absolute;left:244px;top:332.8px;width:740px;height:2.2px;background:#a6a6a6"></div>
<svg style="position:absolute;left:760px;top:120px" width="225" height="212" viewBox="760 120 225 212">
<defs><pattern id="hatch" patternUnits="userSpaceOnUse" width="3.2" height="3.2" patternTransform="rotate(45)"><rect width="3.2" height="3.2" fill="#fff"/><line x1="0" y1="0" x2="0" y2="3.2" stroke="#c2c2c2" stroke-width="1.1"/></pattern></defs>
<path d="M765.9,252.8 Q767,257 772.8,258.1 L799.4,262.4 Q806,263 812.2,265.6 L821.8,268.8 L823,271 L802,271 L802,312 L903,312 L937,312 Q945,315 950.5,320 Q958,324 974,325.4 L974,331 L950,331 Q936,322 918,322 L792,322 L792,272 Q780,268 765.9,262 Z" fill="url(#hatch)"/>
<path d="M765.9,252.8 Q767,257 772.8,258.1 L799.4,262.4 Q806,263 812.2,265.6 L821.8,268.8" fill="none" stroke="#777" stroke-width="0.8"/>
<path d="M937,312.5 Q945,315 950.5,320 Q958,324 974,325.4" fill="none" stroke="#777" stroke-width="0.8"/>
<path d="M828.5,145 L869.4,127.9 L909.4,145" fill="none" stroke="#8a8a8a" stroke-width="2.4"/>
<path d="M828.5,145 L869.4,127.9 L909.4,145" fill="none" stroke="#fff" stroke-width="0.9"/>
<path d="M803,157.5 L828.5,146.5 L910,146.5 L937,157.5 L937,300.5 L902.5,300.5 L902.5,312 L802.2,312 L802.2,274 L863.3,274 L863.3,234 L825,234 L825,197 L803,197 Z" fill="#dcdcdc"/>
<rect x="826" y="234.5" width="37" height="39" fill="#fff"/>
<rect x="904" y="302" width="33" height="9" fill="#fff"/>
<path d="M828,195 H933 M828,198.6 H933 M863,234.3 H933 M863,236.8 H933 M863,271.3 H933 M863,274.8 H933" stroke="#b0b0b0" stroke-width="0.9" stroke-dasharray="2.2,1.6"/>
<path d="M822.6,234 V271.5 M825.6,234 V271.5" stroke="#a8a8a8" stroke-width="0.8"/>
<path d="M935,207.5 V221 M938,207.5 V221" stroke="#a8a8a8" stroke-width="0.8"/>
<path d="M935.5,302 V312 M938.5,302 V312 M903,312.6 H937" stroke="#b0b0b0" stroke-width="0.8"/>
<g fill="none" stroke="#000" stroke-width="3.6" stroke-linejoin="miter">
<path d="M801.2,158.3 L828.3,146.2 L910,146.2 L917.3,149.3"/>
<path d="M928.3,153.8 L939.2,158.5"/>
<path d="M801.3,196.8 L828.5,196.8"/>
<path d="M822.3,234 L863.5,234 L863.5,273.8 L802.5,273.8 L802.5,311.6 L902.5,311.6 L902.5,300.5 L938.6,300.5"/>
</g>
<path d="M917.3,149.3 L928.3,153.8" stroke="#999" stroke-width="3.4"/>
<path d="M917.3,149.3 L928.3,153.8" stroke="#fff" stroke-width="2"/>
<g fill="#f5b400" stroke="#c99500" stroke-width="0.6">
<rect x="800.6" y="159.3" width="6" height="35.5"/>
<rect x="822.6" y="198.4" width="5.4" height="35.2"/>
<rect x="933.6" y="159.2" width="6" height="48.4"/>
<rect x="933.6" y="221" width="6" height="77.8"/>
</g>
<text x="860" y="214.9" font-family="Liberation Sans" font-size="8.9" fill="#484848" stroke="#484848" stroke-width="0.15">Espacios</text>
<text x="860" y="225.2" font-family="Liberation Sans" font-size="8.9" letter-spacing="0.2" fill="#484848" stroke="#484848" stroke-width="0.15">habitables</text>
</svg>
<div class="t" style="left:245.00px;top:355.42px;font-size:16.4px;color:#1a4e8e;font-weight:bold;font-style:normal;">Muro de fachada</div>
<div class="t" style="left:259.40px;top:384.59px;font-size:11px;color:#1a1a2e;font-weight:normal;font-style:normal;">Nombre</div>
<div style="position:absolute;left:402.2px;top:375.3px;width:215.8px;height:18.4px;background:#ffffff;border:1px solid #e2e2e2;border-bottom:1.5px solid #a2a2a2;border-radius:2px"></div>
<div class="t" style="left:407.00px;top:385.58px;font-size:11.6px;color:#101020;font-weight:normal;font-style:normal;">Patio Interior 1</div>
<div class="t" style="left:648.60px;top:384.59px;font-size:11px;color:#1a1a2e;font-weight:normal;font-style:normal;">Zona</div>
<div style="position:absolute;left:762.4px;top:375.7px;width:219.9px;height:18.6px;background:#fcfcfc;border:1px solid #d9d9d9;border-bottom-color:#b4b4b4;border-radius:3px"></div>
<svg style="position:absolute;left:969.3px;top:382.0px" width="12" height="8"><path d="M1.8,2.2 L6,6 L10.2,2.2" fill="none" stroke="#7a7a7a" stroke-width="1"/></svg>
<div class="t" style="left:766.90px;top:386.29px;font-size:11px;color:#101020;font-weight:normal;font-style:normal;">Edificio Objeto</div>
<div style="position:absolute;left:244.2px;top:408.4px;width:374.5px;height:70.0px;border:1px solid #dcdcdc"></div>
<div style="position:absolute;left:250.6px;top:406.4px;width:67px;height:4px;background:#fff"></div>
<div class="t" style="left:253.60px;top:409.29px;font-size:11px;color:#34348e;font-weight:normal;font-style:italic;">Dimensiones</div>
<div class="t" style="left:259.40px;top:430.19px;font-size:11px;color:#1a1a2e;font-weight:normal;font-style:normal;">Superficie</div>
<div style="position:absolute;left:402.2px;top:421.2px;width:80.3px;height:18.2px;background:#ffffff;border:1px solid #e2e2e2;border-bottom:1.5px solid #a2a2a2;border-radius:2px"></div>
<div class="t" style="left:408.30px;top:432.11px;font-size:11.8px;color:#202030;font-weight:normal;font-style:normal;">16.2</div>
<div class="t" style="left:489.60px;top:430.79px;font-size:11px;color:#1a1a2e;font-weight:normal;font-style:normal;">m2</div>
<div class="t" style="left:401.70px;top:453.31px;font-size:9.2px;color:#1a1a2e;font-weight:normal;font-style:normal;">Longitud</div>
<div style="position:absolute;left:444.2px;top:445.6px;width:38.3px;height:11.6px;background:#ffffff;border:1px solid #e2e2e2;border-bottom:1.5px solid #a2a2a2;border-radius:2px"></div>
<div class="t" style="left:449.00px;top:454.21px;font-size:11.8px;color:#202030;font-weight:normal;font-style:normal;">6</div>
<div class="t" style="left:489.60px;top:453.01px;font-size:9.5px;color:#1a1a2e;font-weight:normal;font-style:normal;">m</div>
<div class="t" style="left:402.00px;top:469.71px;font-size:9.2px;color:#1a1a2e;font-weight:normal;font-style:normal;">Altura</div>
<div style="position:absolute;left:444.2px;top:462.2px;width:38.3px;height:12.1px;background:#ffffff;border:1px solid #e2e2e2;border-bottom:1.5px solid #a2a2a2;border-radius:2px"></div>
<div class="t" style="left:449.00px;top:470.41px;font-size:11.8px;color:#202030;font-weight:normal;font-style:normal;">2.7</div>
<div class="t" style="left:489.60px;top:469.21px;font-size:9.5px;color:#1a1a2e;font-weight:normal;font-style:normal;">m</div>
<div style="position:absolute;left:633.5px;top:409px;width:349.1px;height:69.5px;border:1px solid #dcdcdc"></div>
<div style="position:absolute;left:640.3px;top:407px;width:81px;height:4px;background:#fff"></div>
<div class="t" style="left:643.30px;top:409.89px;font-size:11px;color:#34348e;font-weight:normal;font-style:italic;">Características</div>
<div class="t" style="left:648.60px;top:431.19px;font-size:11px;color:#1a1a2e;font-weight:normal;font-style:normal;">Orientación</div>
<div style="position:absolute;left:762.4px;top:421.6px;width:204.1px;height:18.5px;background:#fcfcfc;border:1px solid #d9d9d9;border-bottom-color:#b4b4b4;border-radius:3px"></div>
<svg style="position:absolute;left:953.5px;top:427.9px" width="12" height="8"><path d="M1.8,2.2 L6,6 L10.2,2.2" fill="none" stroke="#7a7a7a" stroke-width="1"/></svg>
<div class="t" style="left:766.90px;top:432.09px;font-size:11px;color:#101020;font-weight:normal;font-style:normal;">SO</div>
<div class="t" style="left:648.60px;top:460.79px;font-size:11px;color:#1a1a2e;font-weight:normal;font-style:normal;">Patrón de sombras</div>
<div style="position:absolute;left:762.4px;top:451.9px;width:204.1px;height:18.1px;background:#fcfcfc;border:1px solid #d9d9d9;border-bottom-color:#b4b4b4;border-radius:3px"></div>
<svg style="position:absolute;left:953.5px;top:457.9px" width="12" height="8"><path d="M1.8,2.2 L6,6 L10.2,2.2" fill="none" stroke="#7a7a7a" stroke-width="1"/></svg>
<div class="t" style="left:766.90px;top:461.99px;font-size:11px;color:#101020;font-weight:normal;font-style:normal;">Patio Interior</div>
<div style="position:absolute;left:244.2px;top:493.4px;width:738.1px;height:234.6px;border:1px solid #dcdcdc"></div>
<div style="position:absolute;left:250.2px;top:491.4px;width:220px;height:4px;background:#fff"></div>
<div class="t" style="left:253.20px;top:494.29px;font-size:11px;color:#34348e;font-weight:normal;font-style:italic;">Parámetros característicos del cerramiento</div>
<div class="t" style="left:259.80px;top:518.94px;font-size:12.3px;color:#101020;font-weight:bold;font-style:normal;">Propiedades térmicas</div>
<div style="position:absolute;left:402px;top:508.9px;width:205.5px;height:18.9px;background:#fcfcfc;border:1px solid #d9d9d9;border-bottom-color:#b4b4b4;border-radius:3px"></div>
<svg style="position:absolute;left:594.5px;top:515.3px" width="12" height="8"><path d="M1.8,2.2 L6,6 L10.2,2.2" fill="none" stroke="#7a7a7a" stroke-width="1"/></svg>
<div class="t" style="left:406.50px;top:519.79px;font-size:11px;color:#101020;font-weight:normal;font-style:normal;">Por defecto</div>
<div class="t" style="left:724.90px;top:517.79px;font-size:11px;color:#8a8a8a;font-weight:normal;font-style:italic;">Transmitancia térmica</div>
<div style="position:absolute;left:871.4px;top:508.2px;width:57.7px;height:21.4px;background:#efefef;border-radius:2px"></div>
<div class="t" style="left:877.30px;top:518.02px;font-size:11.5px;color:#8a8a8a;font-weight:normal;font-style:normal;">1.8</div>
<div class="t" style="left:935.90px;top:517.79px;font-size:11px;color:#8a8a8a;font-weight:normal;font-style:italic;">W/m2K</div>
<div style="position:absolute;left:245.4px;top:741.5px;width:73.2px;height:18.7px;background:#fdfdfd;border:1px solid #d4d4d4;border-bottom-color:#c4c4c4;border-radius:3px;box-shadow:0 1px 1px rgba(0,0,0,0.05)"></div>
<div class="t" style="left:267.10px;top:752.19px;font-size:11px;color:#2a5aa8;font-weight:normal;font-style:normal;">Añadir</div>
<div style="position:absolute;left:339.5px;top:741.5px;width:73.2px;height:18.7px;background:#fdfdfd;border:1px solid #d4d4d4;border-bottom-color:#c4c4c4;border-radius:3px;box-shadow:0 1px 1px rgba(0,0,0,0.05)"></div>
<div class="t" style="left:354.80px;top:752.19px;font-size:11px;color:#2a5aa8;font-weight:normal;font-style:normal;">Modificar</div>
<div style="position:absolute;left:480.5px;top:741.5px;width:72.9px;height:18.7px;background:#fdfdfd;border:1px solid #d4d4d4;border-bottom-color:#c4c4c4;border-radius:3px;box-shadow:0 1px 1px rgba(0,0,0,0.05)"></div>
<div class="t" style="left:501.75px;top:752.19px;font-size:11px;color:#2a5aa8;font-weight:normal;font-style:normal;">Borrar</div>
<div style="position:absolute;left:882px;top:741.5px;width:99.0px;height:18.7px;background:#fdfdfd;border:1px solid #d4d4d4;border-bottom-color:#c4c4c4;border-radius:3px;box-shadow:0 1px 1px rgba(0,0,0,0.05)"></div>
<div style="position:absolute;left:885.5px;top:745.0px;width:94px;height:13.700000000000045px;background:#eeeeee"></div>
<div class="t" style="left:902.05px;top:752.19px;font-size:11px;color:#1e1e3c;font-weight:normal;font-style:normal;">Vista clásica</div>
</body></html>
